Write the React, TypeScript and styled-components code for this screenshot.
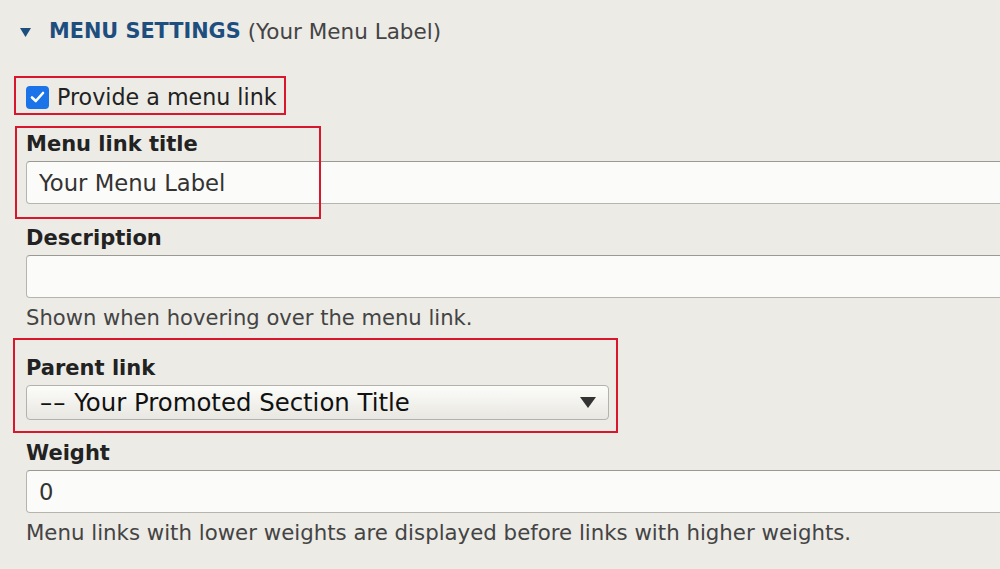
import styled, { createGlobalStyle } from "styled-components";

const GlobalStyle = createGlobalStyle`
  html, body {
    margin: 0;
    padding: 0;
    background: #ecebe6;
    overflow: hidden;
  }
  body {
    font-family: "DejaVu Sans", "Liberation Sans", sans-serif;
    color: #222;
  }
`;

const Page = styled.div`
  width: 1000px;
  height: 569px;
  padding: 18px 0 0 26px;
  box-sizing: border-box;
  overflow: hidden;
`;

const Legend = styled.div`
  display: flex;
  align-items: center;
  height: 26px;
  margin-left: -6px;
`;

const Arrow = styled.svg`
  width: 11px;
  height: 9px;
  margin-right: 18px;
  margin-top: 2px;
`;

const LegendTitle = styled.span`
  font-size: 20.8px;
  font-weight: bold;
  color: #1d4e7e;
  margin-right: 7px;
`;

const LegendNote = styled.span`
  font-size: 21.5px;
  color: #444;
`;

const Field = styled.div<{ $top: number }>`
  position: relative;
  margin-top: ${(p) => p.$top}px;
`;

const Highlight = styled.div<{ $l: number; $t: number; $w: number; $h: number }>`
  position: absolute;
  left: ${(p) => p.$l}px;
  top: ${(p) => p.$t}px;
  width: ${(p) => p.$w}px;
  height: ${(p) => p.$h}px;
  border: 2px solid #d8172c;
  box-sizing: border-box;
  pointer-events: none;
`;

const CheckRow = styled.label`
  display: flex;
  align-items: center;
  gap: 8px;
  height: 24px;
  font-size: 22.2px;
  color: #222;
`;

const Box = styled.span`
  width: 23px;
  height: 23px;
  border-radius: 4px;
  background: #1a73e8;
  display: flex;
  align-items: center;
  justify-content: center;
`;

const Label = styled.div`
  font-size: 21px;
  font-weight: bold;
  color: #222;
  line-height: 24px;
  margin-bottom: 5px;
`;

const TextInput = styled.div`
  width: 1000px;
  height: 43px;
  box-sizing: border-box;
  border: 1px solid #b5b4ae;
  border-top-color: #9a9993;
  border-radius: 4px;
  background: #fbfbf9;
  padding-left: 12px;
  display: flex;
  align-items: center;
  font-size: 22.7px;
  color: #333;
`;

const Select = styled.div`
  width: 583px;
  height: 35px;
  box-sizing: border-box;
  border: 1px solid #b3b2ac;
  border-radius: 4px;
  background: linear-gradient(#fcfcfa, #e8e7e1);
  padding: 0 12px 0 13px;
  display: flex;
  align-items: center;
  justify-content: space-between;
  font-size: 24.4px;
  color: #111;
`;

const Dashes = styled.span`
  letter-spacing: 1px;
`;

const Help = styled.div<{ $size?: number }>`
  font-size: ${(p) => p.$size ?? 21.1}px;
  color: #444;
  margin-top: 7px;
`;

function App() {
  return (
    <>
      <GlobalStyle />
      <Page>
        <Legend>
          <Arrow viewBox="0 0 11 9">
            <path d="M0 0 H11 L5.5 9 Z" fill="#1d4e7e" />
          </Arrow>
          <LegendTitle>MENU SETTINGS</LegendTitle>
          <LegendNote>(Your Menu Label)</LegendNote>
        </Legend>

        <Field $top={41}>
          <Highlight $l={-12} $t={-9} $w={272} $h={39} />
          <CheckRow>
            <Box>
              <svg width="15" height="12" viewBox="0 0 15 12">
                <path d="M2 6.5 L5.8 10 L13 2" fill="none" stroke="#fff" strokeWidth="2.6" strokeLinecap="round" strokeLinejoin="round" />
              </svg>
            </Box>
            Provide a menu link
          </CheckRow>
        </Field>

        <Field $top={23}>
          <Highlight $l={-11} $t={-6} $w={306} $h={93} />
          <Label>Menu link title</Label>
          <TextInput>Your Menu Label</TextInput>
        </Field>

        <Field $top={22}>
          <Label>Description</Label>
          <TextInput />
          <Help>Shown when hovering over the menu link.</Help>
        </Field>

        <Field $top={26}>
          <Highlight $l={-13} $t={-18} $w={605} $h={95} />
          <Label>Parent link</Label>
          <Select>
            <span>
              <Dashes>––</Dashes> Your Promoted Section Title
            </span>
            <svg width="16" height="11" viewBox="0 0 16 11">
              <path d="M0 0 H16 L8 11 Z" fill="#333" />
            </svg>
          </Select>
        </Field>

        <Field $top={21}>
          <Label>Weight</Label>
          <TextInput>0</TextInput>
          <Help $size={21.3}>
            Menu links with lower weights are displayed before links with higher weights.
          </Help>
        </Field>
      </Page>
    </>
  );
}

export default App;
